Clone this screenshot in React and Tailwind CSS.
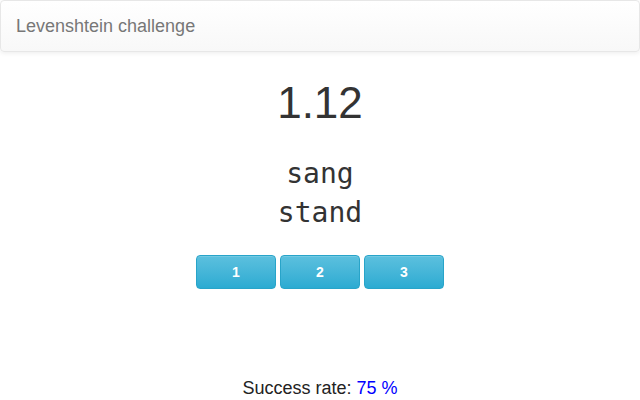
import React from 'react';

const App = () => {
    const options = [1, 2, 3];

    return (
        <div className="w-[640px] h-[400px] bg-white font-[Liberation_Sans,Arial,sans-serif] text-[#333]">
            {/* Navbar */}
            <div className="h-[52px] border border-[#e7e7e7] rounded-[4px] bg-gradient-to-b from-white to-[#f8f8f8] shadow-[0_1px_5px_rgba(0,0,0,0.08)] flex items-center px-[15px]">
                <span className="text-[18px] text-[#777]">Levenshtein challenge</span>
            </div>

            {/* Main */}
            <div className="flex flex-col items-center">
                <div className="mt-[28px] text-[44px] leading-[46px] text-[#333]">1.12</div>
                <div className="mt-[28px] font-[DejaVu_Sans_Mono,monospace] text-[28px] leading-[39px] text-[#333] text-center">
                    <div>sang</div>
                    <div>stand</div>
                </div>
                <div className="mt-[23px] flex gap-[4px]">
                    {options.map((n) => (
                        <button
                            key={n}
                            className="w-[80px] h-[34px] rounded-[4px] border border-[#28a4c9] bg-gradient-to-b from-[#5bc0de] to-[#2aabd2] text-white text-[14px] font-bold shadow-[inset_0_1px_0_rgba(255,255,255,0.15)]"
                        >
                            {n}
                        </button>
                    ))}
                </div>
                <div className="mt-[89px] text-[18px] leading-[20px] text-[#222]">
                    Success rate: <span className="text-[#0000ff]">75 %</span>
                </div>
            </div>
        </div>
    );
};

export default App;
